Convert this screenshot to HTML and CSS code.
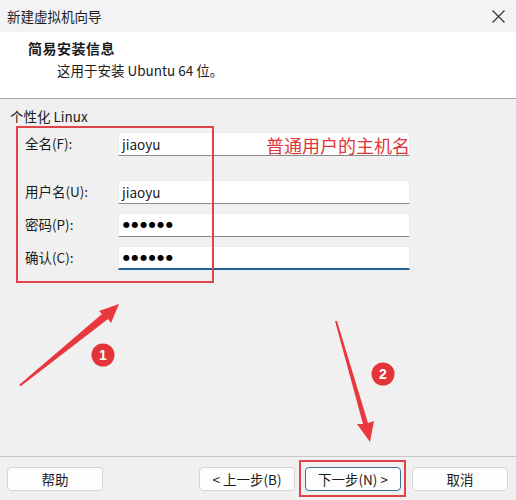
FILE: index.html
```html
<!DOCTYPE html>
<html lang="zh-CN">
<head>
<meta charset="utf-8">
<title>新建虚拟机向导</title>
<link rel="stylesheet" href="styles.css">
</head>
<body>
<div class="window">
  <div class="titlebar">
    <span class="title">新建虚拟机向导</span>
    <svg class="close" width="13" height="13" viewBox="0 0 13 13"><path d="M0.5 0.5 L12.5 12.5 M12.5 0.5 L0.5 12.5" stroke="#333" stroke-width="1.2" fill="none"/></svg>
  </div>
  <div class="header">
    <div class="h-title">简易安装信息</div>
    <div class="h-sub">这用于安装 Ubuntu 64 位。</div>
  </div>
  <div class="body">
    <div class="group-label">个性化 Linux</div>
    <div class="form">
      <div class="label row1">全名(F):</div>
      <div class="field row1">jiaoyu</div>
      <div class="label row2">用户名(U):</div>
      <div class="field row2">jiaoyu</div>
      <div class="label row3">密码(P):</div>
      <div class="field row3 dots">●●●●●●</div>
      <div class="label row4">确认(C):</div>
      <div class="field row4 dots focused">●●●●●●</div>
    </div>
  </div>
  <div class="footer">
    <button class="btn">帮助</button>
    <div class="spacer"></div>
    <button class="btn">&lt; 上一步(B)</button>
    <button class="btn primary">下一步(N) &gt;</button>
    <button class="btn">取消</button>
  </div>

  <div class="mark-box form-box"></div>
  <div class="mark-box next-box"></div>
  <div class="note">普通用户的主机名</div>
  <svg class="arrows" width="516" height="500" viewBox="0 0 516 500">
    <polygon points="19,385 102,314 99,311 119,304 111,323 108,319 21,386" fill="#e8383d"/>
    <polygon points="335,321 363,424 357,424 370,442 374,421 368,423 337,321" fill="#e8383d"/>
    <circle cx="103" cy="355" r="11.5" fill="#e3343a"/>
    <text x="103" y="360" text-anchor="middle" class="num">1</text>
    <circle cx="383" cy="374" r="11.5" fill="#e3343a"/>
    <text x="383" y="379" text-anchor="middle" class="num">2</text>
  </svg>
</div>
</body>
</html>
```

FILE: styles.css
```css
* { box-sizing: border-box; }
html, body { margin: 0; padding: 0; }
body {
  font-family: "Noto Sans CJK SC", "Noto Sans", sans-serif;
  font-size: 13.5px;
  color: #1b1b1b;
  background: #f0f0f0;
}
.window {
  position: relative;
  width: 516px;
  height: 500px;
  background: #f0f0f0;
  display: flex;
  flex-direction: column;
  overflow: hidden;
}
.titlebar {
  height: 32px;
  flex: none;
  display: flex;
  align-items: center;
  justify-content: space-between;
  padding: 0 11px 0 7px;
  background: #f3f3f5;
}
.title { font-size: 13.5px; line-height: 20px; }
.close { display: block; }
.header {
  height: 67px;
  flex: none;
  background: #ffffff;
  border-bottom: 1px solid #a8a8a8;
  padding: 6px 0 0 28px;
}
.h-title { font-weight: bold; font-size: 14px; line-height: 20px; letter-spacing: 0.5px; }
.h-sub { line-height: 20px; margin-top: 2px; margin-left: 29px; }
.body {
  flex: 1;
  padding: 7px 0 0 10px;
}
.group-label { line-height: 20px; }
.form {
  display: grid;
  grid-template-columns: 93px 292px;
  grid-template-rows: 24px 48px 33px 33px;
  margin: 6px 0 0 15px;
}
.row1 { grid-row: 1; }
.row2 { grid-row: 2; margin-top: 24px; }
.row3 { grid-row: 3; margin-top: 9px; }
.row4 { grid-row: 4; margin-top: 9px; }
.label { line-height: 22px; height: 24px; }
.field {
  height: 24px;
  background: #ffffff;
  border: 1px solid #ececec;
  border-bottom: 1px solid #8a8a8a;
  border-radius: 3px 3px 0 0;
  padding-left: 3px;
  line-height: 22px;
  font-size: 13.5px;
}
.dots {
  font-family: "DejaVu Sans", sans-serif;
  font-size: 8px;
  letter-spacing: 1.6px;
  padding-left: 4px;
  color: #000;
}
.focused { border-bottom: 2px solid #1d5f97; }
.footer {
  height: 44px;
  flex: none;
  border-top: 1px solid #c8c8c8;
  display: flex;
  align-items: flex-start;
  gap: 10px;
  padding: 10px 8px 0 7px;
}
.spacer { flex: 1; }
.btn {
  width: 96px;
  height: 24px;
  font-family: inherit;
  font-size: 13.5px;
  color: #1b1b1b;
  background: #fdfdfd;
  border: 1px solid #d4d4d4;
  border-radius: 4px;
  padding: 0;
  line-height: 20px;
}
.btn.primary { border-color: #3c6f9e; }
.btn:last-child { margin-left: 1px; }
.mark-box {
  position: absolute;
  border: 2px solid #e0444a;
}
.form-box { left: 16px; top: 126px; width: 198px; height: 157px; }
.next-box { left: 299px; top: 460px; width: 107px; height: 37px; }
.note {
  position: absolute;
  left: 266px;
  top: 133px;
  font-size: 18px;
  line-height: 24px;
  color: #e0353b;
}
.arrows { position: absolute; left: 0; top: 0; pointer-events: none; }
.num { fill: #ffffff; font-family: "Liberation Sans", sans-serif; font-size: 14px; font-weight: bold; }
```
